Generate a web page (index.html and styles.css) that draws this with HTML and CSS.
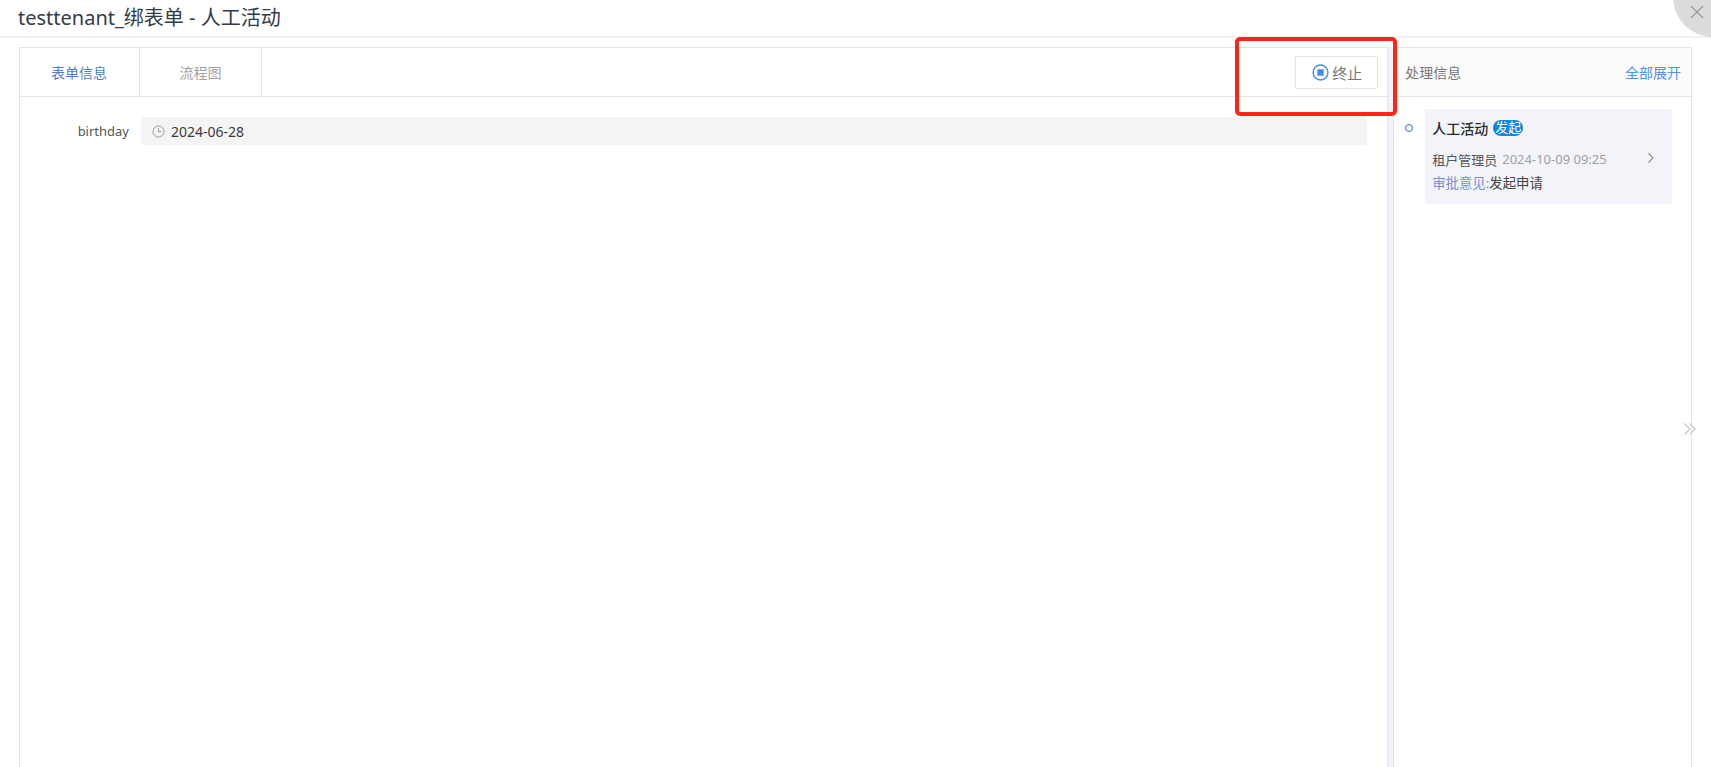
FILE: index.html
```html
<!DOCTYPE html>
<html lang="zh-CN">
<head>
<meta charset="utf-8">
<title>testtenant_绑表单 - 人工活动</title>
<link rel="stylesheet" href="styles.css">
</head>
<body>
<div class="page">
  <header class="top">
    <h1 class="title">testtenant_绑表单 - 人工活动</h1>
  </header>
  <button class="close" aria-label="关闭">
    <svg width="14" height="14" viewBox="0 0 14 14"><path d="M1 1L13 13M13 1L1 13" fill="none" stroke="#9a9a9a" stroke-width="1.3"/></svg>
  </button>
  <main class="main">
    <section class="left">
      <div class="tabbar">
        <div class="tab tab-active">表单信息</div>
        <div class="tab tab-second">流程图</div>
        <div class="actions">
          <button class="stop">
            <svg width="17" height="17" viewBox="0 0 16 16"><circle cx="8" cy="8" r="7" fill="none" stroke="#3f8fe6" stroke-width="1.3"/><rect x="5" y="5" width="6" height="6" rx="0.5" fill="#3f8fe6"/></svg>
            <span>终止</span>
          </button>
        </div>
      </div>
      <div class="form">
        <div class="row">
          <label class="label">birthday</label>
          <div class="value">
            <svg width="13" height="13" viewBox="0 0 13 13"><circle cx="6.5" cy="6.5" r="5.5" fill="none" stroke="#9b9b9b" stroke-width="1"/><path d="M6.5 3.2V6.7H9.6" fill="none" stroke="#9b9b9b" stroke-width="1"/></svg>
            <span>2024-06-28</span>
          </div>
        </div>
      </div>
    </section>
    <div class="divider"></div>
    <aside class="right">
      <div class="right-head">
        <span class="right-title">处理信息</span>
        <a class="expand">全部展开</a>
      </div>
      <div class="timeline">
        <span class="dot"></span>
        <div class="card">
          <div class="card-title"><strong>人工活动</strong><span class="badge">发起</span></div>
          <div class="card-meta">
            <span class="who">租户管理员</span><span class="when">2024-10-09 09:25</span>
            <svg class="chev" width="8" height="12" viewBox="0 0 8 12"><path d="M1.5 1.5L6 6L1.5 10.5" fill="none" stroke="#8a8a8a" stroke-width="1.1"/></svg>
          </div>
          <div class="card-note"><span class="note-key">审批意见:</span>发起申请</div>
        </div>
      </div>
    </aside>
    <svg class="collapse" width="14" height="14" viewBox="0 0 14 14"><path d="M1.5 1.5L7 7L1.5 12.5M6.5 1.5L12 7L6.5 12.5" fill="none" stroke="#c8c8c8" stroke-width="1.3"/></svg>
  </main>
  <div class="mark"></div>
</div>
</body>
</html>
```
FILE: styles.css
```css
* { box-sizing: border-box; }
html, body { margin: 0; height: 100%; overflow: hidden; background: #fff; }
body { font-family: "Noto Sans", "Noto Sans CJK SC", sans-serif; font-size: 13px; color: #333; }
.page { position: relative; height: 767px; overflow: hidden; }
.top { height: 38px; padding-left: 18px; border-bottom: 2px solid #f1f1f1; }
.title { margin: 0; font-size: 20px; line-height: 36px; font-weight: 400; color: #333b47; }
.close { position: absolute; top: -43px; left: 1673px; width: 80px; height: 80px; padding: 0; border: 0; border-radius: 50%; background: #dcdcdc; }
.close svg { position: absolute; left: 17px; top: 48px; }
.main { position: relative; display: flex; height: 729px; padding: 9px 19px 0 19px; }
.left { width: 1370px; border: 1px solid #e3e5ec; border-bottom: 0; }
.tabbar { display: flex; height: 49px; border-bottom: 1px solid #e3e5ec; }
.tab { display: flex; align-items: center; justify-content: center; border-right: 1px solid #e3e5ec; font-size: 14px; }
.tab-active { width: 120px; padding-right: 1px; color: #4e7fc9; }
.tab-second { width: 122px; color: #a3a3a3; }
.actions { flex: 1; display: flex; justify-content: flex-end; align-items: center; padding: 1px 9px 0 0; }
.stop { display: flex; align-items: center; justify-content: center; gap: 3px; width: 83px; height: 33px; padding: 0 0 0 1px; border: 1px solid #e3e5ec; border-radius: 2px; background: #fff; font: inherit; font-size: 15px; color: #777; }
.form { padding: 20px 20px 0 0; }
.row { display: flex; align-items: center; }
.label { width: 121px; padding-right: 12px; text-align: right; font-size: 13px; color: #555; }
.value { flex: 1; display: flex; align-items: center; gap: 6px; height: 28px; padding-left: 11px; border-radius: 3px; background: #f4f4f4; font-size: 14px; color: #3a3a3a; }
.divider { width: 6px; background: #f1f2f9; border-right: 1px solid #e3e5ec; }
.right { width: 298px; border-top: 1px solid #e3e5ec; border-right: 1px solid #e3e5ec; }
.right-head { display: flex; justify-content: space-between; align-items: center; height: 49px; padding: 0 10px 0 11px; background: #fbfbfb; border-bottom: 1px solid #e3e5ec; font-size: 14px; }
.right-title { color: #777; }
.expand { color: #4a94ef; }
.timeline { display: flex; padding: 12px 19px 0 11px; }
.dot { flex: none; width: 8px; height: 8px; margin: 15px 12px 0 0; border: 1.5px solid #3a6fb5; border-radius: 50%; }
.card { flex: 1; height: 95px; padding: 9px 8px 0 7px; background: #f3f4fa; }
.card-title { display: flex; align-items: center; gap: 5px; height: 20px; }
.card-title strong { font-size: 14px; font-weight: 500; color: #2b2b2b; }
.badge { height: 16px; padding: 0 2px; border-radius: 8px; background: #0d86e0; font-size: 13px; line-height: 15px; color: #fff; }
.card-meta { position: relative; display: flex; align-items: center; gap: 5px; height: 20px; margin-top: 11px; font-size: 13px; }
.who { color: #555; }
.when { color: #a0a0a0; }
.chev { position: absolute; left: 215px; top: 3px; }
.card-note { margin-top: 4px; font-size: 13.4px; line-height: 20px; color: #444; }
.note-key { color: #7a8fd0; }
.collapse { position: absolute; left: 1683px; top: 384px; }
.mark { position: absolute; left: 1235px; top: 37px; width: 162px; height: 79px; border: 4px solid #ff2318; border-radius: 5px; }
```
